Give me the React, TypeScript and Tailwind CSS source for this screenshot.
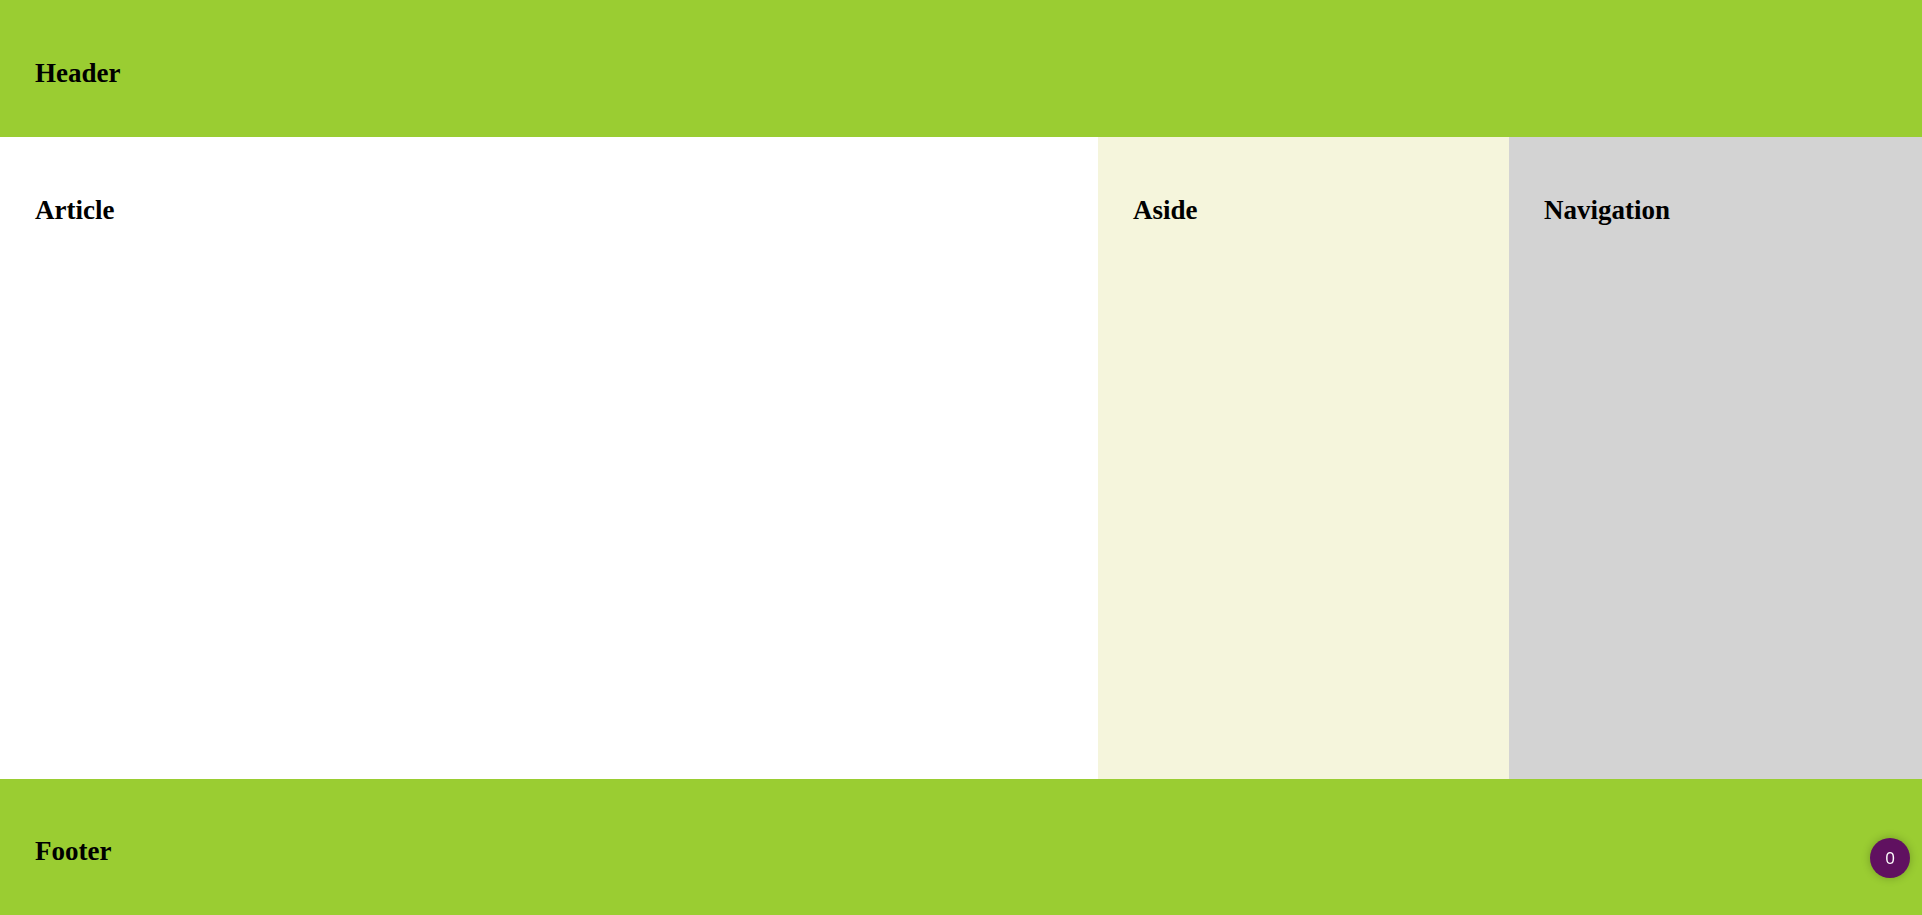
export default function App() {
  return (
    <div className="flex h-screen flex-col overflow-hidden font-['Liberation_Serif',serif] text-black">
      <header className="h-[137px] shrink-0 bg-[#9acd32] px-[35px] pt-[58px]">
        <h2 className="text-[27px] font-bold leading-[31px]">Header</h2>
      </header>

      <main className="grid flex-1 grid-cols-[1098px_411px_1fr]">
        <article className="bg-white px-[35px] pt-[58px]">
          <h2 className="text-[27px] font-bold leading-[31px]">Article</h2>
        </article>
        <aside className="bg-[#f5f5dc] px-[35px] pt-[58px]">
          <h2 className="text-[27px] font-bold leading-[31px]">Aside</h2>
        </aside>
        <nav className="bg-[#d3d3d3] px-[35px] pt-[58px]">
          <h2 className="text-[27px] font-bold leading-[31px]">Navigation</h2>
        </nav>
      </main>

      <footer className="h-[136px] shrink-0 bg-[#9acd32] px-[35px] pt-[57px]">
        <h2 className="text-[27px] font-bold leading-[31px]">Footer</h2>
      </footer>

      {/* counter badge */}
      <div className="fixed right-3 bottom-[37px] flex h-10 w-10 items-center justify-center rounded-full bg-[#601160] font-['Open_Sans',sans-serif] text-[17px] text-white shadow-[0_0_8px_rgba(0,0,0,0.25)]">
        0
      </div>
    </div>
  );
}
